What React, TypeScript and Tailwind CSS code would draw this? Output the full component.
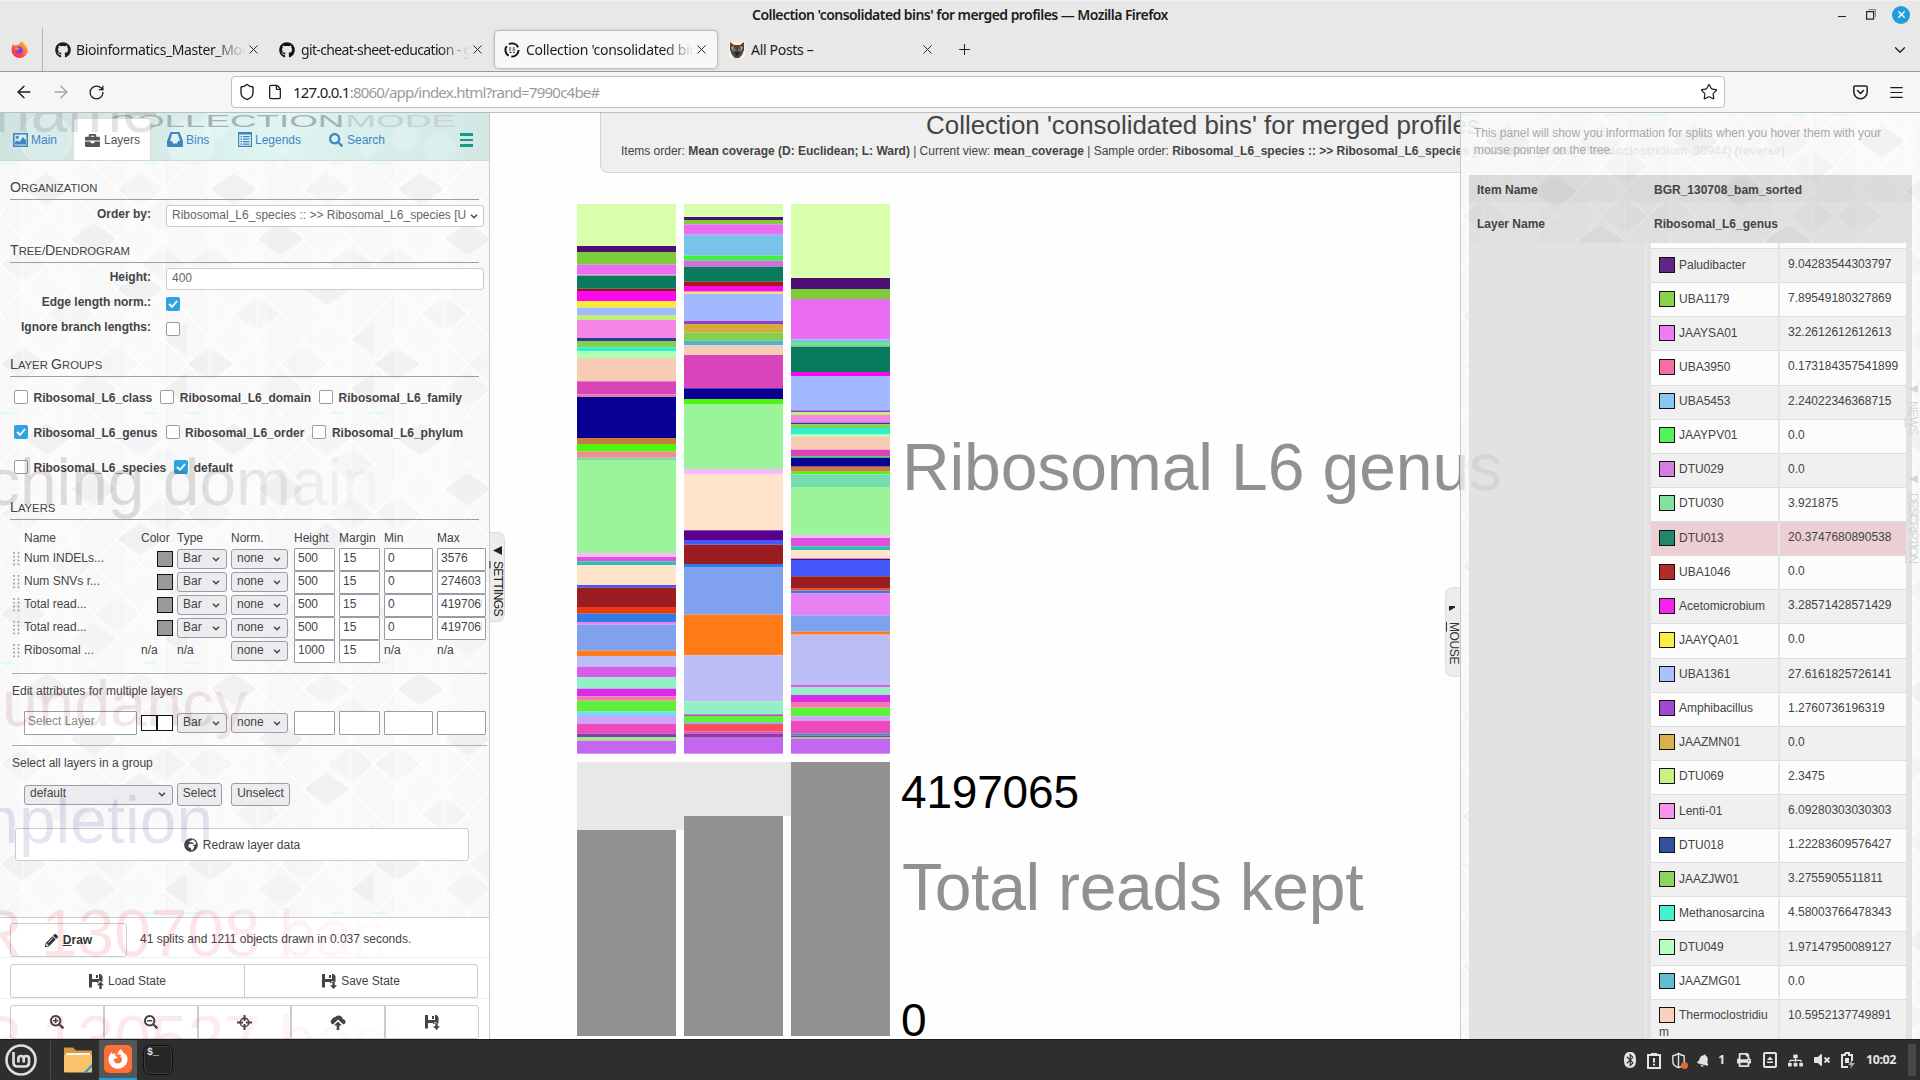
import React from "react";
import {
  FaGithub, FaBriefcase, FaSearch, FaPencilAlt, FaGlobeAfrica, FaSearchPlus, FaSearchMinus, FaFirefoxBrowser,
  FaBluetooth, FaPrint, FaBell, FaSitemap, FaVolumeMute,
} from "react-icons/fa";
import {
  ArrowLeft, ArrowRight, RotateCw, Shield, File, Star, Menu, Plus, X, ChevronDown, ShieldHalf,
} from "lucide-react";

const INNER = 'font-["Liberation_Sans",Arial,sans-serif]';

/* ---------- stacked bars: [top, colour] in thirds of a pixel below y=190 ---------- */
type Seg = [number, string];
const colA: Seg[] = [
  [42, "#d9ffad"], [168, "#4e0f74"], [186, "#7dcd38"], [224, "#e96cf2"], [254, "#e2a3c8"], [257, "#087b5d"], [296, "#8b1a1a"],
  [303, "#f909ee"], [333, "#faeb36"], [353, "#a2b9ff"], [375, "#c2ef7a"], [390, "#f487e6"], [444, "#243f96"], [453, "#86ce4c"],
  [472, "#2cf0c8"], [484, "#adffb5"], [504, "#f6ccb4"], [574, "#d944bb"], [613, "#dd7aa5"], [621, "#080093"], [744, "#cc7b3d"],
  [762, "#4ff411"], [785, "#f68d8a"], [803, "#76dcaf"], [810, "#9bf49a"], [1089, "#f5bcf9"], [1101, "#e050e0"], [1114, "#2bc3b0"],
  [1125, "#ffe3cb"], [1185, "#4458fa"], [1193, "#991c20"], [1251, "#ef380c"], [1271, "#2f7de4"], [1296, "#ee82f0"], [1304, "#80a2ee"],
  [1382, "#ff7b17"], [1398, "#bdbdf5"], [1431, "#db5cea"], [1461, "#94efc9"], [1496, "#d72de8"], [1519, "#fb74ae"], [1532, "#5ff03c"],
  [1565, "#78d9f4"], [1578, "#cda4fc"], [1602, "#ef49c0"], [1631, "#843fa0"], [1641, "#98ee88"], [1652, "#c467ee"], [1691, ""],
];
const colB: Seg[] = [
  [42, "#d9ffad"], [81, "#4e0f74"], [90, "#7dcd38"], [103, "#e96cf2"], [134, "#79c3ea"], [197, "#41ef46"], [212, "#cd71dc"],
  [231, "#087b5d"], [275, "#ac1515"], [288, "#f909ee"], [305, "#faeb36"], [311, "#a2b9ff"], [393, "#9340c9"], [402, "#d4ab38"],
  [428, "#82d04d"], [452, "#50b4cb"], [466, "#f6ccb4"], [495, "#d944bb"], [595, "#080093"], [627, "#4ff411"], [642, "#9bf49a"],
  [837, "#f5bcf9"], [853, "#ffe3cb"], [1021, "#5b008d"], [1050, "#4458fa"], [1064, "#991c20"], [1122, "#2f7de4"], [1131, "#80a2ee"],
  [1274, "#ff7b17"], [1396, "#bdbdf5"], [1534, "#94efc9"], [1573, "#b34fc0"], [1578, "#5ff03c"], [1596, "#6fc4e8"], [1601, "#fb4c60"],
  [1624, "#ef49c0"], [1631, "#843fa0"], [1643, "#c467ee"], [1691, ""],
];
const colC: Seg[] = [
  [42, "#d9ffad"], [264, "#4e0f74"], [297, "#7dcd38"], [327, "#e96cf2"], [448, "#79c3ea"], [456, "#77dd92"], [470, "#087b5d"],
  [546, "#f909ee"], [558, "#a2b9ff"], [661, "#9340c9"], [666, "#c2ef7a"], [675, "#f487e6"], [698, "#243f96"], [703, "#82d04d"],
  [714, "#2cf0c8"], [732, "#adffb5"], [740, "#f6ccb4"], [779, "#d944bb"], [799, "#3dbb7d"], [804, "#080093"], [830, "#cc7b3d"],
  [845, "#4ff411"], [853, "#76dcaf"], [891, "#9bf49a"], [1035, "#f5bcf9"], [1044, "#e050e0"], [1069, "#2bc3b0"], [1080, "#ffe3cb"],
  [1106, "#5b008d"], [1110, "#4458fa"], [1159, "#991c20"], [1194, "#ef5030"], [1202, "#2f7de4"], [1210, "#e881f4"], [1276, "#80a2ee"],
  [1325, "#ff7b17"], [1334, "#bdbdf5"], [1484, "#db5cea"], [1491, "#94efc9"], [1515, "#d72de8"], [1536, "#fb74ae"], [1553, "#5ff03c"],
  [1579, "#cda4fc"], [1592, "#ef49c0"], [1630, "#4d8cb5"], [1637, "#843fa0"], [1641, "#98ce98"], [1647, "#c467ee"], [1691, ""],
];

function Stack({ x, segs }: { x: number; segs: Seg[] }) {
  return (
    <>
      {segs.slice(0, -1).map(([t, c], i) => (
        <rect key={i} x={x} width={99} y={190 + t / 3} height={(segs[i + 1][0] - t) / 3} fill={c} />
      ))}
    </>
  );
}

function Canvas() {
  return (
    <svg className={`absolute inset-0 h-full w-full ${INNER}`} viewBox="0 113 1920 926">
      <Stack x={577} segs={colA} />
      <Stack x={684} segs={colB} />
      <Stack x={791} segs={colC} />
      <rect x={577} y={762} width={313} height={274} fill="#e8e8e8" />
      <rect x={676} y={830} width={8} height={206} fill="#fefefe" />
      <rect x={783} y={816} width={8} height={220} fill="#fefefe" />
      <rect x={577} y={830} width={99} height={206} fill="#919191" />
      <rect x={684} y={816} width={99} height={220} fill="#919191" />
      <rect x={791} y={762} width={99} height={274} fill="#919191" />
      <text x={902} y={490} fontSize={66} textLength={600} fill="#919191">Ribosomal L6 genus</text>
      <text x={901} y={808} fontSize={46} textLength={178} fill="#000">4197065</text>
      <text x={902} y={910} fontSize={66} textLength={461.5} fill="#919191">Total reads kept</text>
      <text x={901} y={1036} fontSize={46} fill="#000">0</text>
    </svg>
  );
}

/* ---------- triangular wallpaper used by both side panels ---------- */
const patches: [number, number, number][] = [
  [0, 1, 0.035], [2, 1, 0.02], [1, 3, 0.03], [3, 2, 0.015], [0, 4, 0.015], [2, 5, 0.035], [3, 7, 0.025], [1, 6, 0.02], [0, 8, 0.03],
  [2, 8, 0.01], [3, 9, 0.03], [1, 9, 0.015], [3, 4, 0.02],
];
function Wallpaper({ id }: { id: string }) {
  const w = 46.75;
  const h = 25;
  const lines: string[] = [];
  for (let r = 0; r < 10; r++)
    for (let c = -1; c < 5; c++) {
      const o = r % 2 ? w / 2 : 0;
      lines.push(`M${c * w + o} ${r * h}l${w / 2} ${h}l${w / 2} ${-h}`);
    }
  return (
    <svg className="absolute inset-0 h-full w-full" aria-hidden>
      <defs>
        <pattern id={id} width="187" height="250" patternUnits="userSpaceOnUse" y="3">
          <rect width="187" height="250" fill="#f8f8f8" />
          <rect x="20" width="60" height="250" fill="#fafafa" />
          <rect x="125" width="40" height="250" fill="#fafafa" />
          {patches.map(([c, r, a], i) => {
            const x = c * w + (r % 2 ? w / 2 : 0);
            return <path key={i} d={`M${x} ${r * h}l${w / 2} ${-h / 1.6}l${w / 2} ${h / 1.6}l${-w / 2} ${h / 1.6}z`} fill="#000" fillOpacity={a} />;
          })}
          <path d={lines.join("")} fill="none" stroke="#fff" strokeWidth="1.2" />
          <path d="M23 0V250M70 0V250M117 0V250M163.500 0V250" stroke="#fff" strokeWidth="1" opacity=".6" />
          <path d="M144 249h12M185 249h2M0 249h14" stroke="#dffafa" strokeWidth="2" />
        </pattern>
      </defs>
      <rect width="100%" height="100%" fill={`url(#${id})`} />
    </svg>
  );
}

/* ---------- browser chrome ---------- */
function Fade({ children, className }: { children: React.ReactNode; className: string }) {
  return (
    <span className={`overflow-hidden whitespace-nowrap [mask-image:linear-gradient(to_right,#000_82%,transparent)] ${className}`}>{children}</span>
  );
}

function BrowserChrome() {
  return (
    <div className='shrink-0 font-["Noto_Sans","Open_Sans",sans-serif] text-[#1c1c1c]'>
      <div className="flex h-[28px] items-center border-t border-[#f0f0f0] bg-[#e8e8e8]">
        <div className="w-[120px]" />
        <div className="flex-1 text-center text-[14px] font-semibold tracking-[-0.550px]">Collection 'consolidated bins' for merged profiles — Mozilla Firefox</div>
        <div className="flex w-[120px] items-center justify-end gap-[20px] pr-[10px]">
          <span className="mt-[4px] h-[1.500px] w-[8px] bg-[#222]" />
          <svg className="h-[11px] w-[10px]" viewBox="0 0 10 11"><rect x=".6" y="2.6" width="7" height="7.5" fill="none" stroke="#222" strokeWidth="1.2" /><path d="M2.5 .6H9.4V8" fill="none" stroke="#777" /></svg>
          <span className="-ml-[4px] flex h-[18px] w-[18px] items-center justify-center rounded-full bg-[#1f9ede] text-white"><X size={11} strokeWidth={3} /></span>
        </div>
      </div>
      <div className="flex h-[44px] items-center border-b border-[#9b9b9b] bg-[#e8e8e8] text-[14px]">
        <div className="flex h-full w-[43px] items-center justify-center border-r border-[#b5b5b5] pr-[3px]">
          <svg className="h-[17px] w-[17px]" viewBox="0 0 16 16">
            <defs><linearGradient id="ff" x1="1" y1="0" x2=".2" y2="1"><stop offset="0" stopColor="#ffe226" /><stop offset=".45" stopColor="#ff7139" /><stop offset="1" stopColor="#f0246b" /></linearGradient></defs>
            <path d="M11 .3c.3 1.600 1.500 2.200 2.700 3.700C15 5.600 15.700 7 15.700 8.700A7.500 7.200 0 0 1 .500 8.700C.400 6.500 1 4.500 2.600 2.900c.1.800.3 1.300.7 1.600C4.500 3.700 6 3.600 6.800 3.800 7.800 2 9.300.8 11 .3z" fill="url(#ff)" />
            <circle cx="7.800" cy="8.600" r="3.300" fill="#7542e5" /><path d="M4 6.500c2-.8 3 .2 4.300.8-1 .7-2 .5-2 1.700-1.500 0-2.300-1-2.300-2.500z" fill="#ff8a2c" />
          </svg>
        </div>
        <div className="flex w-[223px] items-center pl-[12px]">
          <FaGithub size={16} color="#1b1f23" /><Fade className="ml-[5px] w-[169px] tracking-[-0.400px]">Bioinformatics_Master_Mod</Fade><X size={15} strokeWidth={1.5} className="ml-[1px]" />
        </div>
        <div className="flex w-[229px] items-center pl-[13px]">
          <FaGithub size={16} color="#111" /><Fade className="ml-[6px] w-[169px] tracking-[-0.640px]">git-cheat-sheet-education - g</Fade><X size={15} strokeWidth={1.5} />
        </div>
        <div className="flex h-[37px] w-[222px] items-center rounded-[4px] bg-[#f7f7f7] pl-[9px] shadow-[0_0_3px_rgba(0,0,0,0.5)]">
          <svg className="h-[16px] w-[16px]" viewBox="0 0 16 16"><circle cx="8" cy="8" r="6.600" fill="none" stroke="#111" strokeWidth="1.900" strokeDasharray="11 2.800" /><path d="M5 6h2.200M8.800 6h2.200M5 8h2M8.500 8h2.700M5.500 10.300h2M9 10.300h1.700" stroke="#333" strokeWidth="1.200" /></svg>
          <Fade className="ml-[6px] w-[168px] tracking-[-0.280px]">Collection 'consolidated bins</Fade><X size={15} strokeWidth={1.500} />
        </div>
        <div className="flex w-[230px] items-center pl-[12px]">
          <svg className="h-[16px] w-[16px]" viewBox="0 0 16 16"><rect width="16" height="16" fill="#f6f2ea" /><path d="M1 0l4 3h6l4-3v8l-2 5-3 3H6l-3-3-2-5z" fill="#5a4335" /><path d="M2 5l3-1-1 6zM14 5l-3-1 1 6z" fill="#b9986f" /><path d="M5.500 10h5L8 15z" fill="#2c211b" /><circle cx="5.500" cy="8" r="1.300" fill="#2d8ddc" /><circle cx="10.500" cy="8" r="1.300" fill="#2d8ddc" /></svg>
          <span className="ml-[6px] w-[168px] tracking-[-0.300px]">All Posts –</span><X size={15} strokeWidth={1.500} className="ml-[1px]" />
        </div>
        <Plus size={17} strokeWidth={1.500} className="ml-[9px]" />
        <ChevronDown size={18} strokeWidth={1.700} className="ml-auto mr-[11px]" />
      </div>
      <div className="flex h-[41px] items-center border-b border-[#bdbdbd] bg-[#f6f6f6]">
        <div className="flex w-[231px] items-center gap-[17px] pl-[14px]">
          <ArrowLeft size={20} strokeWidth={1.700} /><ArrowRight size={20} strokeWidth={1.700} className="text-[#a5a5a5]" /><RotateCw size={17} strokeWidth={1.800} />
        </div>
        <div className="flex h-[32px] w-[1494px] items-center rounded-[4px] border border-[#bfbfbf] bg-white pl-[6px] text-[15px]">
          <Shield size={18} strokeWidth={1.800} /><File size={16} strokeWidth={1.900} className="ml-[11px]" />
          <span className="ml-[10px] tracking-[-0.770px]">127.0.0.1<span className="text-[#9a9a9a]">:8060/app/index.html?rand=7990c4be#</span></span>
          <Star size={18} strokeWidth={1.600} className="ml-auto mr-[6px]" />
        </div>
        <svg className="ml-[128px] h-[15px] w-[15px]" viewBox="0 0 15 15" fill="none" stroke="#222" strokeWidth="1.500" strokeLinecap="round"><path d="M2 1h11q1.200 0 1.200 1.200V7a6.700 6.700 0 0 1-13.400 0V2.200Q.8 1 2 1z" /><path d="M4.500 5.500l3 3 3-3" /></svg>
        <Menu size={17} strokeWidth={1.700} className="ml-[20px]" />
      </div>
    </div>
  );
}

/* ---------- glyphs ---------- */
function PictureIcon() {
  return <svg className="h-[14px] w-[15px]" viewBox="0 0 15 14" fill="currentColor"><path fillRule="evenodd" d="M0 0h15v14H0zM1.500 1.500v11h12v-11z" /><circle cx="4.200" cy="4.300" r="1.500" /><path d="M2 11.500V9l2.500-1.500L6.500 9l3.500-5 3 3.500v4z" /></svg>;
}
function InboxIcon() {
  return <svg className="h-[15px] w-[16px]" viewBox="0 0 16 15" fill="currentColor"><path fillRule="evenodd" d="M3.500 0h9L16 9v5q0 1-1 1H1q-1 0-1-1V9zM5 2L3 9h2l1 2.500h4L11 9h2L11 2z" /></svg>;
}
function ListIcon() {
  return <svg className="h-[15px] w-[14px]" viewBox="0 0 14 15" fill="currentColor"><path fillRule="evenodd" d="M0 0h14v15H0zM1.200 2.500v11.300h11.600V2.500z" /><path d="M2.500 4h1.500v1.300H2.500zM5 4h6.500v1.300H5zM2.500 6.500h1.500v1.300H2.500zM5 6.500h6.500v1.300H5zM2.500 9h1.500v1.300H2.500zM5 9h6.500v1.300H5zM2.500 11.500h1.500v1.300H2.500zM5 11.500h6.500v1.300H5z" /></svg>;
}
function FloppyIcon({ up }: { up?: boolean }) {
  return (
    <svg className="h-[15px] w-[15px]" viewBox="0 0 15 15" fill="currentColor">
      <path fillRule="evenodd" d="M0 0h3v5h7V0h1.500L13.500 2v6H12V7H9.500v2H8V8H3v5.500H0zM7 1h2v3H7z" />
      {up ? <path d="M11.500 7.500l3.500 3.700h-2.300V15h-2.400v-3.800H8z" /> : <path d="M11.500 15L8 11.300h2.300V7.500h2.400v3.800H15z" />}
    </svg>
  );
}
function CloudUpIcon() {
  return (
    <svg className="h-[15px] w-[16px]" viewBox="0 0 16 15" fill="currentColor">
      <path d="M3 9.500A2.700 2.700 0 0 1 2 4.500 2.800 2.800 0 0 1 5 2.300 4.300 4.300 0 0 1 12.800 4 2.800 2.800 0 0 1 13.500 9.500L8 4.500z" />
      <path d="M8 6.500l4 4H9.300V15H6.700v-4.500H4z" />
    </svg>
  );
}
function TargetIcon() {
  return (
    <svg className="h-[15px] w-[15px]" viewBox="0 0 15 15" fill="none" stroke="currentColor">
      <circle cx="7.500" cy="7.500" r="4.300" strokeWidth="1.500" /><path d="M7.500 0v6M7.500 9v6M0 7.500h6M9 7.500h6" strokeWidth="2" />
    </svg>
  );
}

/* ---------- form bits ---------- */
function Heading({ parts }: { parts: string[] }) {
  return (
    <div className="ml-[10px] h-[20px] w-[469px] whitespace-nowrap border-b border-[#9d9d9d] text-[14.200px] leading-[14px] text-[#444]">
      {parts.map((p, i) => (<span key={i}>{p[0]}<span className="text-[11.300px]">{p.slice(1)}</span></span>))}
    </div>
  );
}
function Check({ on }: { on?: boolean }) {
  return on ? (
    <span className="flex h-[14px] w-[14px] shrink-0 items-center justify-center rounded-[2px] bg-[#2fa3e0]">
      <svg className="h-[10px] w-[10px]" viewBox="0 0 10 10"><path d="M1 5l3 3 5-6" fill="none" stroke="#fff" strokeWidth="1.800" /></svg>
    </span>
  ) : (
    <span className="h-[14px] w-[14px] shrink-0 rounded-[2px] border-[1.500px] border-[#9a9aa8] bg-white" />
  );
}
function Chev() {
  return <svg className="h-[5px] w-[8px] shrink-0" viewBox="0 0 8 5"><path d="M1 .8l3 3 3-3" fill="none" stroke="#444" strokeWidth="1.500" /></svg>;
}
function Sel({ label, className }: { label: string; className: string }) {
  return (
    <span className={`flex h-[20px] items-center justify-between rounded-[3px] border border-[#9a9aa8] bg-[#ececee] pl-[5px] pr-[6px] leading-[14px] ${className}`}>
      <span className="-mt-[3px]">{label}</span><Chev />
    </span>
  );
}
function Inp({ v, className }: { v?: string; className: string }) {
  return <span className={`block overflow-hidden whitespace-nowrap rounded-[1px] border border-[#9a9aa8] bg-white pl-[3px] pr-[3px] ${className}`}><span className="block overflow-hidden">{v}</span></span>;
}
const layerRows = [
  ["Num INDELs...", "3576"], ["Num SNVs r...", "274603"], ["Total read...", "4197065"], ["Total read...", "4197065"],
];
function Grip() {
  return (
    <svg className="h-[15px] w-[7px]" viewBox="0 0 7 15">
      <path d="M1 0V15M5.500 0V15" stroke="#999" strokeWidth="1.600" strokeDasharray="1.800 2" />
    </svg>
  );
}
const COLS = "grid grid-cols-[11px_117px_36px_54px_63px_45px_45px_53px_49px]";

function Group({ items }: { items: [string, boolean][] }) {
  return (
    <div className="flex h-[35px] items-center gap-[8px] pl-[14px]">
      {items.map(([t, on]) => (
        <label key={t} className="flex items-center gap-[5.500px] font-bold"><Check on={on} /><span className="mt-[2px]">{t}</span></label>
      ))}
    </div>
  );
}

const BTN = "flex items-center justify-center border border-[#ccc] bg-white";

function GhostLabels() {
  return (
    <svg className="pointer-events-none absolute inset-0 h-full w-full" viewBox="0 113 490 926" fontSize={66}>
      <defs>
        <linearGradient id="fadeX" gradientUnits="userSpaceOnUse" x1="0" x2="420" y1="0" y2="0">
          <stop offset=".45" stopColor="#fff" /><stop offset=".75" stopColor="#666" /><stop offset="1" stopColor="#000" />
        </linearGradient>
        <mask id="fadeMask" maskUnits="userSpaceOnUse" x="-60" y="100" width="600" height="960"><rect x="-60" y="100" width="600" height="960" fill="url(#fadeX)" /></mask>
      </defs>
      <g mask="url(#fadeMask)">
        <text x={-6} y={131} fill="#000" fillOpacity=".11">name</text>
        <text x={-13} y={505} fill="#000" fillOpacity=".12">ching domain</text>
        <text x={2} y={726} fill="#7a1010" fillOpacity=".1" fontSize={65}>undancy</text>
        <text x={-36} y={844} fill="#00007a" fillOpacity=".1">mpletion</text>
        <text x={-25} y={957} fill="#e6001e" fillOpacity=".11">R 130708 bam</text>
        <text x={-25} y={1063} fill="#e6005a" fillOpacity=".09">R 130527 bam</text>
      </g>
    </svg>
  );
}

function LeftPanel() {
  return (
    <div className="relative flex h-full w-[490px] flex-col border-r border-[#ccc] bg-white text-[12px] text-[#444]">
      <div className="relative h-[48px] shrink-0 overflow-hidden border-b border-[#d5d5d5] bg-[linear-gradient(90deg,#cfe3e1,#d6e9e7_30%,#def5f1_55%,#d3e7e5)]">
        <svg className="absolute inset-0 h-full w-full" viewBox="0 113 490 48">
          <g fill="#eafaf8" fillOpacity=".5"><circle cx="190" cy="145" r="24" /><circle cx="215" cy="125" r="14" /><circle cx="300" cy="120" r="20" fillOpacity=".3" /><circle cx="371" cy="148" r="9" /><circle cx="445" cy="150" r="17" fillOpacity=".25" /><circle cx="285" cy="151" r="5" /><circle cx="410" cy="138" r="14" fillOpacity=".35" /></g>
          <circle cx="42" cy="140" r="26" fill="#d9ecea" stroke="#e6f3f2" />
          <text x="107" y="127" fontSize="16" textLength="240" lengthAdjust="spacingAndGlyphs" fill="#a3b3b1">COLLECTION</text>
          <text x="348" y="127" fontSize="16" textLength="113" lengthAdjust="spacingAndGlyphs" fill="#c3d3d1">MODE</text>
        </svg>
        <div className="relative flex h-full items-end text-[#3d85c6]">
          <div className="flex h-[38px] w-[73px] items-center gap-[3px] pb-[3px] pl-[13px]"><PictureIcon />Main</div>
          <div className="flex h-[42px] w-[78px] items-center gap-[4px] rounded-t-[4px] border border-b-0 border-[#ddd] bg-white pl-[11px] pt-[1px] text-[#555]"><FaBriefcase size={15} />Layers</div>
          <div className="flex h-[38px] w-[87px] items-center gap-[3px] pb-[3px] pl-[16px]"><InboxIcon />Bins</div>
          <div className="flex h-[38px] w-[91px] items-center gap-[3px] pb-[3px]"><ListIcon />Legends</div>
          <div className="flex h-[38px] w-[131px] items-center gap-[4px] pb-[3px]"><FaSearch size={14} />Search</div>
          <div className="flex h-[36px] flex-col gap-[3px] pt-[9px]"><span className="h-[2.500px] w-[13px] bg-[#1a9988]" /><span className="h-[2.500px] w-[13px] bg-[#1a9988]" /><span className="h-[2.500px] w-[13px] bg-[#1a9988]" /></div>
        </div>
      </div>

      <div className="relative h-[756px] shrink-0 overflow-hidden">
        <Wallpaper id="wl" />
        <div className="relative pt-[19px]">
          <Heading parts={["ORGANIZATION"]} />
          <div className="flex h-[36px] pt-[5px]">
            <span className="w-[151px] text-right font-bold leading-[18px]">Order by:</span>
            <span className="ml-[15px] flex h-[22px] w-[318px] items-center rounded-[3px] border border-[#ccc] bg-white pl-[5px] pr-[5px] text-[#666]"><span className="-mt-[3px] w-[294px] whitespace-nowrap">Ribosomal_L6_species :: &gt;&gt; Ribosomal_L6_species [U</span><span className="ml-auto flex"><Chev /></span></span>
          </div>
          <div className="h-[7px]" />
          <Heading parts={["TREE/", "DENDROGRAM"]} />
          <div className="flex h-[34px] pt-[5px]">
            <span className="w-[151px] text-right font-bold leading-[18px]">Height:</span>
            <span className="ml-[15px] flex h-[22px] w-[318px] items-center rounded-[3px] border border-[#ccc] bg-white pb-[2px] pl-[5px] text-[#666]">400</span>
          </div>
          <div className="flex h-[25px]"><span className="w-[151px] text-right font-bold leading-[10px]">Edge length norm.:</span><span className="ml-[15px] flex"><Check on /></span></div>
          <div className="flex h-[25px]"><span className="w-[151px] text-right font-bold leading-[10px]">Ignore branch lengths:</span><span className="ml-[15px] flex"><Check /></span></div>
          <div className="h-[10px]" />
          <Heading parts={["LAYER ", "GROUPS"]} />
          <div className="h-[2px]" />
          <Group items={[["Ribosomal_L6_class", false], ["Ribosomal_L6_domain", false], ["Ribosomal_L6_family", false]]} />
          <Group items={[["Ribosomal_L6_genus", true], ["Ribosomal_L6_order", false], ["Ribosomal_L6_phylum", false]]} />
          <Group items={[["Ribosomal_L6_species", false], ["default", true]]} />
          <div className="h-[16px]" />
          <Heading parts={["LAYERS"]} />
          <div className={`${COLS} h-[28px] items-end pb-[1px] pl-[13px] leading-[18px]`}>
            <span /><span>Name</span><span>Color</span><span>Type</span><span>Norm.</span><span>Height</span><span>Margin</span><span>Min</span><span>Max</span>
          </div>
          {layerRows.map(([n, max], i) => (
            <div key={i} className={`${COLS} h-[23px] pl-[13px] leading-[20px]`}>
              <span className="pt-[4px]"><Grip /></span><span>{n}</span>
              <span className="ml-[16px] mt-[3px] h-[16px] w-[16px] border border-[#111] bg-[#999]" />
              <Sel label="Bar" className="mt-[1px] w-[50px]" /><Sel label="none" className="mt-[1px] w-[57px]" />
              <Inp v="500" className="h-[23px] w-[41px] leading-[19px]" /><Inp v="15" className="h-[23px] w-[41px] leading-[19px]" /><Inp v="0" className="h-[23px] w-[49px] leading-[19px]" /><Inp v={max} className="h-[23px] w-[49px] leading-[19px]" />
            </div>
          ))}
          <div className={`${COLS} h-[23px] pl-[13px] leading-[20px]`}>
            <span className="pt-[4px]"><Grip /></span><span>Ribosomal ...</span><span>n/a</span><span>n/a</span>
            <Sel label="none" className="mt-[1px] w-[57px]" /><Inp v="1000" className="h-[23px] w-[41px] leading-[19px]" /><Inp v="15" className="h-[23px] w-[41px] leading-[19px]" /><span>n/a</span><span>n/a</span>
          </div>
          <div className="ml-[12px] mt-[10px] h-[38px] w-[475px] border-t border-[#b0b0b0] pt-[8px] leading-[18px]">Edit attributes for multiple layers</div>
          <div className={`${COLS} h-[24px] pl-[13px] leading-[18px]`}>
            <span /><Inp v="Select Layer" className="h-[24px] w-[113px] text-[#8a8a8a]" />
            <span className="mt-[4px] flex"><span className="h-[16px] w-[16px] border border-[#111] bg-white" /><span className="h-[16px] w-[16px] border border-[#111] bg-white" /></span>
            <Sel label="Bar" className="mt-[2px] w-[50px]" /><Sel label="none" className="mt-[2px] w-[57px]" />
            <Inp className="h-[24px] w-[41px]" /><Inp className="h-[24px] w-[41px]" /><Inp className="h-[24px] w-[49px]" /><Inp className="h-[24px] w-[49px]" />
          </div>
          <div className="ml-[12px] mt-[10px] h-[38px] w-[475px] border-t border-[#b0b0b0] pt-[8px] leading-[18px]">Select all layers in a group</div>
          <div className="flex h-[23px] items-center pl-[24px] leading-[18px]">
            <Sel label="default" className="w-[149px]" />
            <span className="ml-[4px] h-[23px] w-[45px] rounded-[3px] border border-[#9a9aa8] bg-[#ececee] text-center">Select</span>
            <span className="ml-[9px] h-[23px] w-[59px] rounded-[3px] border border-[#9a9aa8] bg-[#ececee] text-center">Unselect</span>
          </div>
          <div className={`${BTN} ml-[15px] mt-[22px] h-[33px] w-[454px] gap-[5px] rounded-[3px]`}><FaGlobeAfrica size={14} />Redraw layer data</div>
        </div>
      </div>

      <div className="flex-1 overflow-hidden border-t border-[#ccc] bg-white">
        <div className="flex h-[40px] items-center border-b border-[#eee] pl-[10px] pt-[5px]">
          <div className={`${BTN} h-[34px] w-[117px] gap-[5px] rounded-[3px] font-bold text-[#333]`}><FaPencilAlt size={13} /><span><u>D</u>raw</span></div>
          <span className="-mt-[3px] ml-[13px]">41 splits and 1211 objects drawn in 0.037 seconds.</span>
        </div>
        <div className="flex h-[41px] border-b border-[#eee] pl-[10px] pt-[6px]">
          <div className={`${BTN} h-[34px] w-[235px] gap-[4px] rounded-l-[3px]`}><FloppyIcon up />Load State</div>
          <div className={`${BTN} h-[34px] w-[233px] gap-[4px] rounded-r-[3px] border-l-0`}><FloppyIcon />Save State</div>
        </div>
        <div className="flex h-[34px] pl-[10px] pt-[6px] text-[#444]">
          <div className={`${BTN} h-[34px] w-[94px] rounded-l-[3px]`}><FaSearchPlus size={14} /></div>
          <div className={`${BTN} h-[34px] w-[94px]`}><FaSearchMinus size={14} /></div>
          <div className={`${BTN} h-[34px] w-[93px]`}><TargetIcon /></div>
          <div className={`${BTN} h-[34px] w-[94px]`}><CloudUpIcon /></div>
          <div className={`${BTN} h-[34px] w-[94px] rounded-r-[3px]`}><FloppyIcon /></div>
        </div>
      </div>
      <GhostLabels />
      <div className="absolute left-[490px] top-[419px] flex h-[90px] w-[15px] items-center rounded-r-[8px] border border-l-0 border-[#ddd] bg-[#ececec] text-[12px] text-[#222] [writing-mode:vertical-rl]">
        <svg className="mt-[13px] h-[9px] w-[9px]" viewBox="0 0 9 9"><path d="M0 4.500L9 0v9z" fill="#222" /></svg>
        <span className="mt-[6px] leading-[13px] tracking-[-0.650px]"><u>S</u>ETTINGS</span>
      </div>
    </div>
  );
}

/* ---------- mouse panel ---------- */
const taxa: [string, string, string][] = [
  ["Paludibacter", "9.04283544303797", "#5f2683"], ["UBA1179", "7.89549180327869", "#8ad34c"], ["JAAYSA01", "32.2612612612613", "#ec7bf5"],
  ["UBA3950", "0.173184357541899", "#f56da6"], ["UBA5453", "2.24022346368715", "#87c9ee"], ["JAAYPV01", "0.0", "#54f25c"],
  ["DTU029", "0.0", "#d37ee0"], ["DTU030", "3.921875", "#85e19d"], ["DTU013", "20.3747680890538", "#20876c"], ["UBA1046", "0.0", "#b42b28"],
  ["Acetomicrobium", "3.28571428571429", "#fa20ef"], ["JAAYQA01", "0.0", "#fbee49"], ["UBA1361", "27.6161825726141", "#abc0ff"],
  ["Amphibacillus", "1.2760736196319", "#9f48d0"], ["JAAZMN01", "0.0", "#d9b24c"], ["DTU069", "2.3475", "#c8f285"],
  ["Lenti-01", "6.09280303030303", "#f693ea"], ["DTU018", "1.22283609576427", "#32509c"], ["JAAZJW01", "3.2755905511811", "#8ed45e"],
  ["Methanosarcina", "4.58003766478343", "#44f2d0"], ["DTU049", "1.97147950089127", "#b3ffbf"], ["JAAZMG01", "0.0", "#63bbd2"],
  ["Thermoclostridium", "10.5952137749891", "#f8d0bd"],
];

function RightPanel() {
  return (
    <div className="relative h-full w-[460px] text-[12px] text-[#444]">
      <div className="absolute -left-[15px] top-[474px] flex h-[90px] w-[15px] rounded-l-[8px] border border-r-0 border-[#ddd] bg-[#ececec] text-[12px] text-[#333] [writing-mode:vertical-rl]">
        <svg className="mr-[5px] mt-[18px] h-[5px] w-[6px]" viewBox="0 0 6 5"><path d="M0 0h6v1.500L0 5z" fill="#222" /></svg>
        <span className="mt-[11px] leading-[12px] tracking-[-0.400px]"><u>M</u>OUSE</span>
      </div>
      <div className="relative h-full w-full overflow-hidden border-l border-[#c8c8c8]">
        <div className="absolute inset-0 opacity-90"><Wallpaper id="wr" /></div>
        <div className="relative flex h-full flex-col pl-[8px]">
          <p className="h-[62px] w-[420px] pl-[5px] pt-[12px] leading-[17px] tracking-[-0.030px] text-[#a8a8a8]">This panel will show you information for splits when you hover them with your mouse pointer on the tree.</p>
          <div className="flex h-[864px] w-[443px] flex-col">
            <div className="flex h-[27px] bg-black/12 pl-[8px] pt-[6px] font-bold leading-[18px]"><span className="w-[177px]">Item Name</span>BGR_130708_bam_sorted</div>
            <div className="flex h-[41px] bg-black/10 pl-[8px] pt-[13px] font-bold leading-[18px]"><span className="w-[177px]">Layer Name</span>Ribosomal_L6_genus</div>
            <div className="flex min-h-0 flex-1 overflow-hidden bg-[#e0e0e0]/92">
              <div className="mr-[4px] w-[178px] border-r-2 border-[#e8e8e8]" />
              <div className="w-[255px] bg-[#e6e6e6]">
                <div className="grid h-[5px] grid-cols-[127px_126px] gap-[2px]"><div className="bg-[#fcfcfc]" /><div className="bg-[#fcfcfc]" /></div>
                {taxa.map(([n, v, c], i) => {
                  const bg = n === "DTU013" ? "bg-[#ebcfd3]" : i % 2 ? "bg-[#fcfcfc]" : "bg-[#f0f0f0]";
                  const long = n.length > 16;
                  return (
                    <div key={n} className={`grid grid-cols-[127px_126px] gap-[2px] leading-[17px] ${long ? "h-[60px]" : "h-[34.130px]"}`}>
                      <div className={`border-t border-[#ddd] pl-[8px] pr-[8px] pt-[7.500px] [word-break:break-all] ${bg}`}>
                        <span className="mr-[4px] inline-block h-[16px] w-[16px] border border-[#111] align-[-4px]" style={{ background: c }} />{n}
                      </div>
                      <div className={`border-t border-[#ddd] pl-[8px] pt-[7px] ${bg}`}>{v}</div>
                    </div>
                  );
                })}
              </div>
            </div>
          </div>
        </div>
        <div className="absolute right-[1px] top-[272px] flex items-center text-[12px] leading-[12px] text-[#ccc]/80 [writing-mode:vertical-rl]">
          <svg className="h-[8px] w-[9px]" viewBox="0 0 9 8"><path d="M0 4L9 0v8z" fill="currentColor" /></svg><span className="mt-[8px] tracking-[-0.500px]">NE<u>W</u>S</span>
        </div>
        <div className="absolute right-[1px] top-[362px] flex items-center text-[12px] leading-[12px] text-[#ccc]/80 [writing-mode:vertical-rl]">
          <svg className="h-[8px] w-[9px]" viewBox="0 0 9 8"><path d="M0 4L9 0v8z" fill="currentColor" /></svg><span className="mt-[10px] tracking-[-1.100px]">DESCRIPTIO<u>N</u></span>
        </div>
        <svg className="pointer-events-none absolute inset-0 h-full w-full" viewBox="1461 113 459 926">
          <text x="902" y="490" fontSize="66" textLength={600} fill="#919191" fillOpacity=".14">Ribosomal L6 genus</text>
        </svg>
      </div>
    </div>
  );
}

/* ---------- desktop taskbar ---------- */
function Taskbar() {
  return (
    <div className='flex h-[41px] shrink-0 items-center border-t border-[#1d1d1d] bg-[#2e2e2e] font-["Noto_Sans",sans-serif] text-[#e4e4e4]'>
      <svg className="ml-[5px] h-[32px] w-[32px]" viewBox="0 0 32 32" fill="none" stroke="#dedede"><circle cx="16" cy="16" r="14.500" strokeWidth="2.600" /><path d="M8.500 8v10.500q0 4 4 4h7.500q4 0 4-4v-4.300a2.700 2.700 0 0 0-5.300 0V18.500M18.700 14.200a2.700 2.700 0 0 0-5.300 0V18.500" strokeWidth="2.700" /></svg>
      <span className="ml-[13px] h-[38px] w-px bg-[#4a4a4a]" />
      <svg className="ml-[13px] h-[26px] w-[28px]" viewBox="0 0 28 26"><path d="M0 1.500Q0 .5 1 .5h8l3 3h15q1 0 1 1V10H0z" fill="#d79b3b" /><path d="M2 6h24v6H2z" fill="#f4f4f4" /><path d="M0 8h28v16.500q0 1-1 1H1q-1 0-1-1z" fill="#f9c26b" /><path d="M28 17v3l-5.500 5.500H19.500z" fill="#1f9ede" /></svg>
      <div className="ml-[7px] flex h-full w-[38px] items-center justify-center border-b-[2px] border-[#1f9ede] bg-[#565656]"><span className="flex h-[28px] w-[28px] items-center justify-center rounded-[5px] bg-[#fb7035]"><FaFirefoxBrowser size={20} color="#fff" /></span></div>
      <span className='ml-[6px] h-[30px] w-[30px] rounded-[7px] border border-[#111] bg-[#262626] pl-[3px] pt-[1px] font-["Liberation_Mono",monospace] text-[10px] font-bold leading-[12px] shadow-[inset_0_0_0_1px_#3c3c3c]'>$_</span>
      <div className="ml-auto flex items-center">
        <FaBluetooth size={16} className="mr-[9px]" />
        <svg className="mr-[9px] h-[17px] w-[14px]" viewBox="0 0 14 17"><path d="M1 3h12v13H1z" fill="none" stroke="#e4e4e4" strokeWidth="2" /><path d="M4 1h6v3H4zM6 6h2v4.500H6zM6 11.800h2v1.800H6z" fill="#e4e4e4" /></svg>
        <span className="relative mr-[10px]"><ShieldHalf size={17} /><span className="absolute -right-[1px] bottom-0 h-[7px] w-[7px] rounded-full bg-[#e0692f]" /></span>
        <FaBell size={13} className="mr-[8px] rotate-[15deg]" />
        <span className="mr-[12px] text-[12px] font-bold">1</span>
        <FaPrint size={14} className="mr-[12px]" />
        <svg className="mr-[11px] h-[16px] w-[14px]" viewBox="0 0 14 16"><rect x="1" y="1" width="12" height="14" rx="1" fill="none" stroke="#e4e4e4" strokeWidth="2" /><path d="M7 4.500l3 3.500H4zM4 9.500h6v1.500H4z" fill="#e4e4e4" /></svg>
        <FaSitemap size={15} className="mr-[11px]" />
        <FaVolumeMute size={16} className="mr-[11px]" />
        <svg className="mr-[11px] h-[17px] w-[14px]" viewBox="0 0 14 17"><path d="M4 1h4v2h3v6M7 15H1V3h3V1" fill="none" stroke="#e4e4e4" strokeWidth="2" /><path d="M4 6h4v5H4z" fill="#e4e4e4" /><path d="M11 8l-4 5h3l-1 4 5-6h-3z" fill="#aaa" /></svg>
        <span className="w-[33px] text-[12.500px] font-bold tracking-[-0.400px]">10:02</span>
        <span className="ml-[9px] mr-[4px] h-[32px] w-[8px] bg-[#484848]" />
      </div>
    </div>
  );
}

export default function App() {
  return (
    <div className="flex h-[1080px] w-[1920px] flex-col overflow-hidden bg-white">
      <BrowserChrome />
      <main className={`relative flex h-[926px] justify-between overflow-hidden bg-[#fefefe] ${INNER}`}>
        <Canvas />
        <div className="absolute left-[600px] top-0 h-[60px] w-[1206px] rounded-b-[8px] border border-t-0 border-[#d3d3d3] bg-[#efefef] text-center text-[#444]">
          <div className="text-[25.900px] leading-[24px]">Collection 'consolidated bins' for merged profiles</div>
          <div className="mt-[5px] whitespace-nowrap text-[12px] leading-[18px] tracking-[-0.015px]">Items order: <b>Mean coverage (D: Euclidean; L: Ward)</b> | Current view: <b>mean_coverage</b> | Sample order: <b>Ribosomal_L6_species :: &gt;&gt; Ribosomal_L6_species [Unknown_genus_Thermoclostridium_30944] (reverse)</b></div>
        </div>
        <LeftPanel />
        <RightPanel />
      </main>
      <Taskbar />
    </div>
  );
}
